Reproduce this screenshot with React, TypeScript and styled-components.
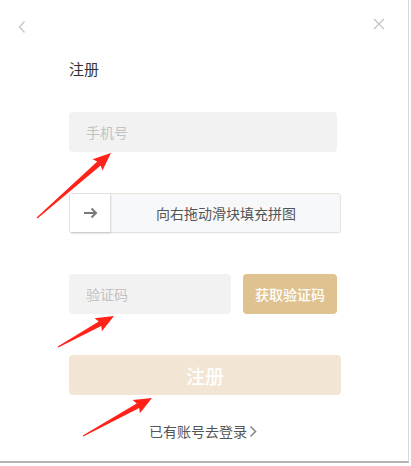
import React from "react";
import styled, { createGlobalStyle } from "styled-components";

const GlobalStyle = createGlobalStyle`
  html, body {
    margin: 0;
    padding: 0;
    background: #ffffff;
  }
  body {
    font-family: "Noto Sans CJK SC", "Liberation Sans", sans-serif;
  }
`;

const Card = styled.div`
  position: relative;
  width: 409px;
  height: 463px;
  box-sizing: border-box;
  background: #ffffff;
  border-right: 1px solid #d9d9d9;
  border-bottom: 2px solid #b4b4b4;
`;

const Header = styled.div`
  display: flex;
  justify-content: space-between;
  align-items: flex-start;
  height: 50px;
  box-sizing: border-box;
  padding: 18px 23px 0 17px;
`;

const IconButton = styled.button<{ $offset?: number }>`
  display: flex;
  padding: 0;
  margin-top: ${({ $offset }) => $offset ?? 0}px;
  border: none;
  background: none;
  cursor: pointer;
`;

const Form = styled.div`
  display: flex;
  flex-direction: column;
  padding-left: 69px;
  width: 272px;
`;

const Title = styled.h2`
  margin: 9px 0 0;
  font-size: 15px;
  line-height: 20px;
  font-weight: 400;
  color: #333333;
`;

const Field = styled.input<{ $width: number }>`
  width: ${({ $width }) => $width}px;
  height: 40px;
  box-sizing: border-box;
  padding: 0 17px;
  border: none;
  border-radius: 4px;
  background: #f2f2f2;
  font-family: inherit;
  font-size: 14px;
  color: #333;
  outline: none;

  &::placeholder {
    color: #c2c2c2;
  }
`;

const Row = styled.div<{ $gap?: number }>`
  display: flex;
  gap: ${({ $gap }) => $gap ?? 0}px;
  margin-top: 41px;
`;

const PhoneRow = styled.div`
  margin-top: 33px;
`;

const Slider = styled.div`
  display: flex;
  height: 40px;
  width: 272px;
  box-sizing: border-box;
  margin-top: 41px;
  border: 1px solid #e6e3df;
  border-radius: 3px;
  background: #f7f8fa;
  box-shadow: 0 1px 1px rgba(0, 0, 0, 0.04);
`;

const Handle = styled.div`
  display: flex;
  align-items: center;
  justify-content: center;
  width: 40px;
  height: 38px;
  background: #ffffff;
  box-shadow: 1px 1px 2px rgba(0, 0, 0, 0.15);
`;

const SliderText = styled.div`
  flex: 1;
  display: flex;
  align-items: center;
  justify-content: center;
  padding-left: 2px;
  font-size: 14px;
  color: #555555;
`;

const CodeButton = styled.button`
  width: 94px;
  height: 40px;
  border: none;
  border-radius: 4px;
  background: #dfc28f;
  color: #ffffff;
  font-family: inherit;
  font-size: 14px;
  font-weight: 500;
  cursor: pointer;
`;

const SubmitButton = styled.button`
  width: 272px;
  height: 40px;
  margin-top: 41px;
  border: none;
  border-radius: 4px;
  background: #f2e5d3;
  color: #ffffff;
  font-family: inherit;
  font-size: 19px;
  font-weight: 500;
  cursor: pointer;
`;

const LoginLink = styled.a`
  display: flex;
  align-items: center;
  justify-content: center;
  gap: 2px;
  margin-top: 26px;
  padding-right: 4px;
  font-size: 14px;
  line-height: 20px;
  color: #555555;
  text-decoration: none;
  cursor: pointer;
`;

const Overlay = styled.svg`
  position: absolute;
  left: 0;
  top: 0;
  pointer-events: none;
`;

type Pt = [number, number];

// annotation arrow: thin tail widening towards a triangular head
const arrowPoints = (tail: Pt, tip: Pt) => {
  const dx = tip[0] - tail[0];
  const dy = tip[1] - tail[1];
  const len = Math.hypot(dx, dy);
  const ux = dx / len;
  const uy = dy / len;
  const nx = -uy;
  const ny = ux;
  const headLen = 16;
  const bx = tip[0] - ux * headLen;
  const by = tip[1] - uy * headLen;
  const p = (x: number, y: number, w: number) => `${x + nx * w},${y + ny * w}`;
  return [
    p(tail[0], tail[1], 0.6),
    p(bx, by, 2.6),
    p(bx - ux * 2, by - uy * 2, 7.5),
    `${tip[0]},${tip[1]}`,
    p(bx - ux * 2, by - uy * 2, -7.5),
    p(bx, by, -2.6),
    p(tail[0], tail[1], -0.6),
  ].join(" ");
};

const arrows: [Pt, Pt][] = [
  [[37, 218], [111, 153]],
  [[58, 347], [114, 316]],
  [[83, 436], [152, 398]],
];

const App: React.FC = () => {
  return (
    <>
      <GlobalStyle />
      <Card>
        <Header>
          <IconButton $offset={2} aria-label="返回">
            <svg width="10" height="14" viewBox="0 0 10 14">
              <path d="M7.5 1.5 L2.5 7 L7.5 12.5" fill="none" stroke="#c8c8c8" strokeWidth="1.4" />
            </svg>
          </IconButton>
          <IconButton aria-label="关闭">
            <svg width="12" height="12" viewBox="0 0 12 12">
              <path d="M1 1 L11 11 M11 1 L1 11" fill="none" stroke="#c4c4c4" strokeWidth="1.3" />
            </svg>
          </IconButton>
        </Header>
        <Form>
          <Title>注册</Title>
          <PhoneRow>
            <Field $width={268} placeholder="手机号" />
          </PhoneRow>
          <Slider>
            <Handle>
              <svg width="15" height="12" viewBox="0 0 15 12">
                <path d="M1 6 H13 M8.5 1.5 L13 6 L8.5 10.5" fill="none" stroke="#7a7a7a" strokeWidth="2" />
              </svg>
            </Handle>
            <SliderText>向右拖动滑块填充拼图</SliderText>
          </Slider>
          <Row $gap={12}>
            <Field $width={162} placeholder="验证码" />
            <CodeButton>获取验证码</CodeButton>
          </Row>
          <SubmitButton>注册</SubmitButton>
          <LoginLink>
            已有账号去登录
            <svg width="8" height="13" viewBox="0 0 8 13">
              <path d="M1.5 1.5 L6.5 6.5 L1.5 11.5" fill="none" stroke="#8a8a8a" strokeWidth="1.6" />
            </svg>
          </LoginLink>
        </Form>
        <Overlay width="409" height="463">
          {arrows.map(([tail, tip], i) => (
            <polygon key={i} points={arrowPoints(tail, tip)} fill="#ff2218" />
          ))}
        </Overlay>
      </Card>
    </>
  );
};

export default App;
